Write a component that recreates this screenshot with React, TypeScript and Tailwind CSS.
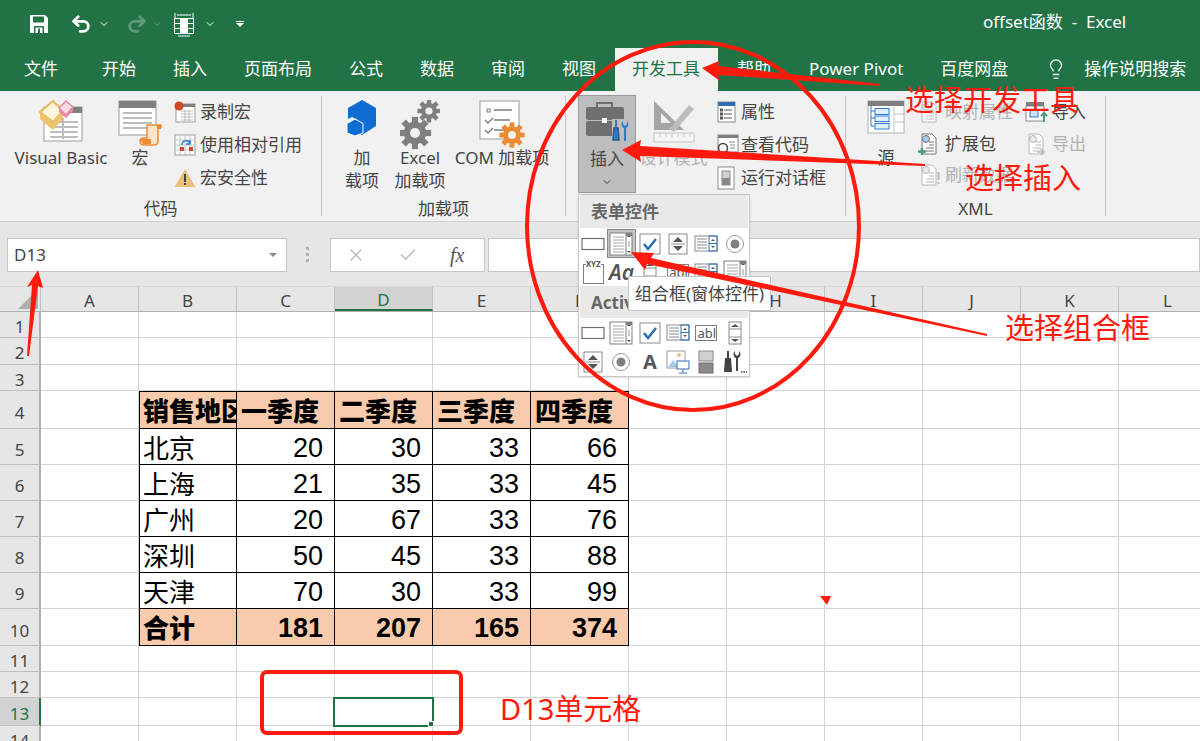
import { ChevronDown, Check, Lightbulb, Redo2, Undo2, X } from "lucide-react";
import type { ReactNode } from "react";

const tabs = ["开始", "插入", "页面布局", "公式", "数据", "审阅", "视图"];
const cols = ["A", "B", "C", "D", "E", "F", "G", "H", "I", "J", "K", "L"];

const rows = [
  { n: 1, h: "h-[26px]" },
  { n: 2, h: "h-[27px]" },
  { n: 3, h: "h-[26px]" },
  { n: 4, h: "h-[38px]", head: true, cells: ["销售地区", "一季度", "二季度", "三季度", "四季度"] },
  { n: 5, h: "h-[36px]", cells: ["北京", "20", "30", "33", "66"] },
  { n: 6, h: "h-[36px]", cells: ["上海", "21", "35", "33", "45"] },
  { n: 7, h: "h-[36px]", cells: ["广州", "20", "67", "33", "76"] },
  { n: 8, h: "h-[36px]", cells: ["深圳", "50", "45", "33", "88"] },
  { n: 9, h: "h-[36px]", cells: ["天津", "70", "30", "33", "99"] },
  { n: 10, h: "h-[37px]", total: true, cells: ["合计", "181", "207", "165", "374"] },
  { n: 11, h: "h-[26px]" },
  { n: 12, h: "h-[26px]" },
  { n: 13, h: "h-[28px]", active: true },
  { n: 14, h: "h-[26px]" },
];

function Save() {
  return (
    <svg width="20" height="20" viewBox="0 0 20 20">
      <path d="M1 1h15l3 3v15H1z" fill="#fff" />
      <rect x="4" y="2.5" width="11" height="6" fill="#217346" />
      <rect x="5" y="12" width="10" height="7" fill="#217346" />
      <rect x="6.5" y="13.5" width="7" height="5.5" fill="#fff" />
      <rect x="9" y="14.5" width="2" height="4.5" fill="#217346" />
    </svg>
  );
}

function FreezeIcon() {
  return (
    <svg width="22" height="26" viewBox="0 0 22 26" fill="none" stroke="#fff" strokeWidth="1">
      <path d="M2 2v5M20 2v5M4 4h14" />
      <rect x="1.5" y="7.5" width="19" height="15" />
      <path d="M7.5 7.5v15M14.5 7.5v15M1.5 12.5h19M1.5 17.5h19" />
      <rect x="8" y="8" width="6" height="14" fill="#fff" />
      <path d="M5 25h12" />
    </svg>
  );
}

function VbIcon() {
  return (
    <svg width="44" height="42" viewBox="0 0 44 42">
      <rect x="5" y="7" width="38" height="34" fill="#fff" stroke="#9a9a9a" />
      <rect x="5" y="7" width="38" height="6" fill="#7f7f7f" />
      <path d="M11 22h28M11 27h28M11 32h28M11 37h28M24 18v21" stroke="#bdbdbd" strokeWidth="2" />
      <path d="M14 1l10 10-10 11L1 12z" fill="#fff5d8" stroke="#e8b860" strokeWidth="2" />
      <path d="M1 12v7l13 11 10-11v-8L14 22z" fill="#eec36c" />
      <path d="M27 1l7 6-7 8-7-7z" fill="#fbdbe2" stroke="#e58aa0" strokeWidth="1.5" />
      <path d="M20 8v4l7 6 7-7V7l-7 8z" fill="#e58aa0" />
    </svg>
  );
}

function MacroIcon() {
  return (
    <svg width="44" height="46" viewBox="0 0 44 46">
      <rect x="1" y="1" width="37" height="34" fill="#fff" stroke="#9a9a9a" />
      <rect x="1" y="1" width="37" height="7" fill="#7f7f7f" />
      <path d="M5 13h29M5 18h29M5 23h29M5 28h29" stroke="#bdbdbd" strokeWidth="2" />
      <path d="M29 25h14v2h-3v14c0 3-2 4-4 4H26c-3 0-4-2-4-4 0-2 2-3 4-3h3z" fill="#fbe4cc" stroke="#ed8b33" strokeWidth="1.5" />
      <path d="M22 39h11v5H25z" fill="#ed8b33" />
      <path d="M39 25h4v4h-4z" fill="#ed8b33" />
    </svg>
  );
}

function RecordIcon() {
  return (
    <svg width="22" height="22" viewBox="0 0 22 22">
      <rect x="2" y="3" width="19" height="18" fill="#fff" stroke="#9a9a9a" />
      <rect x="2" y="3" width="19" height="3" fill="#7f7f7f" />
      <path d="M7 10h12M7 13h12M7 16h12M7 19h12M11 9v11M15 9v11" stroke="#bdbdbd" />
      <circle cx="5" cy="5" r="4.5" fill="#d24726" />
    </svg>
  );
}

function RelativeIcon() {
  return (
    <svg width="22" height="22" viewBox="0 0 22 22" fill="none">
      <rect x="1" y="1" width="20" height="20" fill="#fff" stroke="#9a9a9a" />
      <path d="M6 1v20M11 1v20M16 1v20M1 6h20M1 11h20M1 16h20" stroke="#c4c4c4" />
      <rect x="6" y="13" width="4" height="4" fill="#d24726" />
      <rect x="15" y="13" width="4" height="4" fill="#d24726" />
      <path d="M8 11c0-5 7-6 8-1M16 6v4h-4" stroke="#2b7cd3" strokeWidth="1.5" />
    </svg>
  );
}

function WarnIcon() {
  return (
    <svg width="22" height="20" viewBox="0 0 22 20">
      <path d="M11 1l10.5 18H.5z" fill="#edc07a" />
      <rect x="10" y="6" width="2" height="8" fill="#444" />
      <rect x="10" y="15" width="2" height="2" fill="#444" />
    </svg>
  );
}

function HexIcon() {
  return (
    <svg width="32" height="36" viewBox="0 0 32 36">
      <path d="M16 0l14 8v18l-14 9-4-2V20l-6-3-4 2V8z" fill="#0f6cd0" />
      <path d="M9 19l8 4.5V33l-8 3-8-3v-9.500z" fill="#0f6cd0" stroke="#fff" strokeWidth="1" />
    </svg>
  );
}

function Gear({ x, y, r, fill }: { x: number; y: number; r: number; fill: string }) {
  const teeth = [0, 45, 90, 135, 180, 225, 270, 315];
  return (
    <g transform={`translate(${x} ${y})`}>
      {teeth.map((a) => (
        <rect key={a} x={-r * 0.22} y={-r * 1.15} width={r * 0.44} height={r * 0.5} fill={fill} transform={`rotate(${a})`} />
      ))}
      <circle r={r * 0.8} fill={fill} />
      <circle r={r * 0.36} fill="#f1f1f1" />
    </g>
  );
}

function GearsIcon() {
  return (
    <svg width="40" height="50" viewBox="0 0 40 50">
      <Gear x={29} y={11} r={10} fill="#7f7f7f" />
      <Gear x={15} y={33} r={14} fill="#7f7f7f" />
    </svg>
  );
}

function ComIcon() {
  return (
    <svg width="46" height="48" viewBox="0 0 46 48" fill="none">
      <rect x="1" y="1" width="39" height="38" fill="#fff" stroke="#9a9a9a" />
      <rect x="8" y="9" width="3" height="3" stroke="#7f7f7f" />
      <path d="M15 10h18M15 20h16M15 30h14" stroke="#7f7f7f" strokeWidth="1.5" />
      <path d="M6 20l3 3 5-5M6 30l3 3 5-5" stroke="#7f7f7f" strokeWidth="1.5" />
      <Gear x={33} y={35} r={11} fill="#ed8b33" />
    </svg>
  );
}

function ToolboxIcon() {
  return (
    <svg width="44" height="44" viewBox="0 0 44 44">
      <path d="M12 6V2h15v4" fill="none" stroke="#6f6f6f" strokeWidth="2" />
      <rect x="1" y="6" width="38" height="13" rx="2" fill="#6f6f6f" />
      <rect x="1" y="20" width="38" height="15" rx="2" fill="#6f6f6f" />
      <rect x="17" y="17" width="5" height="5" fill="#fff" />
      <rect x="27" y="18" width="17" height="26" fill="#bdbdbd" />
      <path d="M31 19v8M29 27h4l1 12h-6z" stroke="#33557e" strokeWidth="1.500" fill="#2b7cd3" />
      <path d="M38 20v3l2 2 2-2v-3c2 2 2 6-1 7v13h-2V27c-3-1-3-5-1-7z" fill="#2b7cd3" />
    </svg>
  );
}

function DesignIcon() {
  return (
    <svg width="46" height="44" viewBox="0 0 46 44">
      <path d="M3 1v29h30zM10 13v10h10z" fill="#a6a6a6" fillRule="evenodd" />
      <path d="M18 29L38 5l5 4-20 23z" fill="#bdbdbd" />
      <rect x="3" y="33" width="40" height="9" fill="#f6f6f6" stroke="#c4c4c4" />
      <path d="M9 33v4M15 33v4M21 33v4M27 33v4M33 33v4M39 33v4" stroke="#c4c4c4" />
    </svg>
  );
}

function PropertyIcon() {
  return (
    <svg width="20" height="22" viewBox="0 0 20 22" fill="none">
      <rect x="1" y="1" width="17" height="20" fill="#fff" stroke="#8a8a8a" />
      <rect x="1" y="1" width="17" height="4" fill="#2e6eb5" />
      <path d="M7 9h8M7 13h8M7 17h8" stroke="#555" />
      <rect x="3.500" y="8" width="2" height="2" stroke="#555" />
      <rect x="3.500" y="12" width="2" height="2" stroke="#555" />
      <rect x="3.500" y="16" width="2" height="2" stroke="#555" />
    </svg>
  );
}

function ViewCodeIcon() {
  return (
    <svg width="22" height="22" viewBox="0 0 22 22" fill="none">
      <rect x="1" y="1" width="20" height="17" fill="#fff" stroke="#8a8a8a" />
      <rect x="1" y="1" width="20" height="3" fill="#7f7f7f" />
      <path d="M12 8h6M13 11h5M13 14h5" stroke="#8a8a8a" />
      <circle cx="6" cy="14" r="4.500" fill="#fff" stroke="#444" strokeWidth="1.500" />
      <path d="M9 17l3 4" stroke="#444" strokeWidth="2" />
    </svg>
  );
}

function DialogIcon() {
  return (
    <svg width="18" height="24" viewBox="0 0 18 24">
      <rect x="1" y="1" width="16" height="22" fill="#fff" stroke="#8a8a8a" />
      <rect x="5" y="5" width="8" height="14" fill="#d0d0d0" stroke="#8a8a8a" />
      <rect x="5" y="12" width="8" height="7" fill="#8a8a8a" />
    </svg>
  );
}

function SourceIcon() {
  return (
    <svg width="38" height="34" viewBox="0 0 38 34" fill="none">
      <rect x="1" y="1" width="36" height="32" fill="#fff" stroke="#b0b0b0" />
      <rect x="1" y="1" width="36" height="5" fill="#7f7f7f" />
      <path d="M27 6v27M27 14h10M27 22h10" stroke="#c4c4c4" />
      <path d="M4 6v20h4M4 11h4M4 18h4" stroke="#2b7cd3" />
      <rect x="8" y="8.500" width="14" height="6" stroke="#2b7cd3" fill="#e5effa" />
      <rect x="8" y="16" width="14" height="5.500" stroke="#2b7cd3" fill="#e5effa" />
      <rect x="8" y="23.500" width="14" height="5.500" stroke="#2b7cd3" fill="#e5effa" />
    </svg>
  );
}

function DocIcon({ tone, plus, bang, arrow }: { tone: string; plus?: boolean; bang?: boolean; arrow?: boolean }) {
  return (
    <svg width="22" height="22" viewBox="0 0 22 22" fill="none">
      <path d="M4 1h10l4 4v16H4z" fill="#fff" stroke={tone} />
      <path d="M11 9h5M11 12h5M8 15h8M8 18h8" stroke={tone} />
      <circle cx="8" cy="6" r="3.500" fill={plus ? "#a8c8ea" : "#e8e8e8"} stroke={tone} />
      {plus && <path d="M4 15v7M0 18.500h8" stroke="#4e9a7c" strokeWidth="2.500" />}
      {bang && <path d="M20.500 8v8M20.500 18v2" stroke={tone} strokeWidth="2" />}
      {arrow && <path d="M12 19h7M16 16l3 3-3 3" stroke={tone} strokeWidth="1.500" />}
    </svg>
  );
}

function ImportIcon() {
  return (
    <svg width="24" height="22" viewBox="0 0 24 22" fill="none">
      <rect x="1" y="5" width="18" height="15" fill="#fff" stroke="#8a8a8a" />
      <rect x="1" y="1" width="18" height="4" fill="#7f7f7f" />
      <rect x="5" y="9" width="8" height="7" fill="#cfe0f3" stroke="#2b7cd3" />
      <path d="M19 21v-8M16 15l3-3 3 3" stroke="#4e9a7c" strokeWidth="2" />
    </svg>
  );
}

function Big({ icon, children, className, disabled }: { icon: ReactNode; children: ReactNode; className: string; disabled?: boolean }) {
  return (
    <div className={`flex flex-col items-center text-center leading-[23px] ${disabled ? "text-[#b1b1b1]" : ""} ${className}`}>
      <div className="h-[51px] pt-[5px] flex items-start justify-center">{icon}</div>
      {children}
    </div>
  );
}

function Small({ icon, label, disabled, w, h }: { icon: ReactNode; label: string; disabled?: boolean; w: string; h?: string }) {
  return (
    <div className={`flex items-center whitespace-nowrap ${h ?? "h-[33px]"} ${disabled ? "text-[#b1b1b1]" : ""}`}>
      <div className={`flex items-center shrink-0 ${w}`}>{icon}</div>
      {label}
    </div>
  );
}

function Group({ label, width, children }: { label: string; width: string; children: ReactNode }) {
  return (
    <div className={`flex flex-col pt-[4px] shrink-0 ${width}`}>
      <div className="flex h-[102px]">{children}</div>
      <div className="h-[24px] leading-[24px] text-center">{label}</div>
    </div>
  );
}

function Sep() {
  return <div className="w-px h-[120px] mt-[5px] bg-[#c6c6c6] shrink-0" />;
}

// form control glyphs in the insert dropdown
function BtnCtl() {
  return (
    <svg width="24" height="14" viewBox="0 0 24 14">
      <rect x="1" y="1.500" width="22" height="11" fill="#fff" stroke="#6f6f6f" strokeWidth="1.200" />
    </svg>
  );
}

function ComboCtl() {
  return (
    <svg width="24" height="24" viewBox="0 0 24 24" fill="none">
      <rect x="1" y="1" width="22" height="22" fill="#fff" stroke="#7f7f7f" />
      <path d="M4 5h11M4 8h11M4 11h11M4 14h11M4 17h11M4 20h11" stroke="#a6a6a6" />
      <path d="M17 1v22" stroke="#7f7f7f" />
      <path d="M18 5l2-2 2 2zM18 19l2 2 2-2z" fill="#555" />
      <path d="M20 9v6" stroke="#9a9a9a" />
      <rect x="17" y="1" width="6" height="3" fill="#7f7f7f" />
    </svg>
  );
}

function CheckCtl() {
  return (
    <svg width="22" height="22" viewBox="0 0 22 22" fill="none">
      <rect x="1" y="1" width="20" height="20" fill="#fff" stroke="#8a8a8a" />
      <path d="M5 11l4 5 8-10" stroke="#2e6eb5" strokeWidth="2.500" />
    </svg>
  );
}

function SpinCtl() {
  return (
    <svg width="20" height="22" viewBox="0 0 20 22" fill="none">
      <rect x="1" y="1" width="18" height="20" fill="#fff" stroke="#8a8a8a" />
      <path d="M5 9l5-5 5 5zM5 13l5 5 5-5z" fill="#555" />
      <path d="M3 11h14" stroke="#8a8a8a" />
    </svg>
  );
}

function ListCtl() {
  return (
    <svg width="24" height="18" viewBox="0 0 24 18" fill="none">
      <rect x="1" y="1" width="22" height="15" fill="#fff" stroke="#8a8a8a" />
      <path d="M3 4h10M3 7h10M3 10h10M3 13h10" stroke="#8a8a8a" />
      <rect x="15" y="1" width="8" height="15" stroke="#2e6eb5" />
      <path d="M15 8.500h8" stroke="#2e6eb5" />
      <path d="M17 6l2-2 2 2zM17 11l2 2 2-2z" fill="#555" />
    </svg>
  );
}

function RadioCtl() {
  return (
    <svg width="20" height="20" viewBox="0 0 20 20">
      <circle cx="10" cy="10" r="8.500" fill="#fff" stroke="#9a9a9a" />
      <circle cx="10" cy="10" r="4.500" fill="#7f7f7f" />
    </svg>
  );
}

function GroupCtl() {
  return (
    <div className="relative w-[21px] h-[20px] mt-[3px] border border-[#7f7f7f]">
      <span className="absolute -top-[6px] left-[2px] bg-white text-[8px] leading-[9px] font-bold text-[#555]">XYZ</span>
    </div>
  );
}

function AblCtl() {
  return (
    <div className="w-[22px] h-[16px] border border-[#7f7f7f] text-[13px] leading-[14px] text-[#555] bg-white px-px overflow-hidden">abl</div>
  );
}

function ScrollCtl() {
  return (
    <svg width="14" height="24" viewBox="0 0 14 24" fill="none">
      <rect x="1" y="1" width="12" height="22" fill="#fff" stroke="#8a8a8a" />
      <path d="M1 8h12M1 16h12" stroke="#8a8a8a" />
      <path d="M3 6l4-3 4 3zM3 18l4 3 4-3z" fill="#555" />
    </svg>
  );
}

function ImageCtl() {
  return (
    <svg width="24" height="24" viewBox="0 0 24 24" fill="none">
      <rect x="1" y="1" width="18" height="17" fill="#fff" stroke="#9a9a9a" />
      <circle cx="13" cy="5" r="2" fill="#edc07a" />
      <path d="M2 17l5-7 6 7z" fill="#a8c8ea" />
      <rect x="11" y="11" width="12" height="8" fill="#fff" stroke="#2e6eb5" />
      <path d="M17 19v3M13 23h8" stroke="#2e6eb5" />
    </svg>
  );
}

function ToggleCtl() {
  return (
    <svg width="16" height="24" viewBox="0 0 16 24">
      <rect x="1" y="1" width="14" height="10" fill="#d0d0d0" stroke="#8a8a8a" />
      <rect x="1" y="13" width="14" height="10" fill="#8a8a8a" stroke="#6f6f6f" />
    </svg>
  );
}

function MoreCtl() {
  return (
    <svg width="24" height="24" viewBox="0 0 24 24" fill="none">
      <path d="M5 1v8M3 9h4l1 12H2z" stroke="#444" strokeWidth="2" fill="#444" />
      <path d="M12 1v3l2 2 2-2V1c2 2 2 6-1 7v13h-2V8c-3-1-3-5-1-7z" fill="#444" />
      <path d="M18 22h1.500M20.500 22H22M23 22h1" stroke="#444" strokeWidth="1.500" />
    </svg>
  );
}

function Ctl({ children, selected }: { children?: ReactNode; selected?: boolean }) {
  return (
    <div className={`flex items-center justify-center ${selected ? "bg-[#c6c6c6] border border-[#8a8a8a]" : ""}`}>{children}</div>
  );
}

function InsertMenu() {
  return (
    <div className="absolute left-[578px] top-[194px] w-[172px] h-[183px] bg-white border border-[#c6c6c6] text-[#666] shadow-sm">
      <div className="h-[33px] mx-[1px] bg-[#e9e9e9] font-bold leading-[33px] pl-[11px] text-[#666]">表单控件</div>
      <div className="grid grid-cols-6 grid-rows-[29px_28px] pt-[1px]">
        <Ctl><BtnCtl /></Ctl>
        <Ctl selected><ComboCtl /></Ctl>
        <Ctl><CheckCtl /></Ctl>
        <Ctl><SpinCtl /></Ctl>
        <Ctl><ListCtl /></Ctl>
        <Ctl><RadioCtl /></Ctl>
        <Ctl><GroupCtl /></Ctl>
        <Ctl><span className="italic font-semibold text-[21px] leading-[28px] text-[#555]">Aa</span></Ctl>
        <Ctl><ScrollCtl /></Ctl>
        <Ctl><AblCtl /></Ctl>
        <Ctl><ListCtl /></Ctl>
        <Ctl><ComboCtl /></Ctl>
      </div>
      <div className="h-[32px] mx-[1px] bg-[#e9e9e9] font-bold leading-[33px] pl-[11px] text-[#666] text-[17px]">ActiveX 控件</div>
      <div className="grid grid-cols-6 grid-rows-[29px_30px]">
        <Ctl><BtnCtl /></Ctl>
        <Ctl><ComboCtl /></Ctl>
        <Ctl><CheckCtl /></Ctl>
        <Ctl><ListCtl /></Ctl>
        <Ctl><AblCtl /></Ctl>
        <Ctl><ScrollCtl /></Ctl>
        <Ctl><SpinCtl /></Ctl>
        <Ctl><RadioCtl /></Ctl>
        <Ctl><span className="font-bold text-[20px] text-[#555]">A</span></Ctl>
        <Ctl><ImageCtl /></Ctl>
        <Ctl><ToggleCtl /></Ctl>
        <Ctl><MoreCtl /></Ctl>
      </div>
      <div className="absolute left-[49px] top-[81px] w-[143px] h-[35px] bg-white border border-[#c6c6c6] text-[17px] leading-[33px] text-center text-[#444] whitespace-nowrap">
        组合框(窗体控件)
      </div>
    </div>
  );
}

function Sheet() {
  return (
    <div>
      {rows.map((r) => (
        <div key={r.n} className={`flex ${r.h}`}>
          <div
            className={`w-[41px] shrink-0 border-b border-b-[#c0c0c0] border-r-2 flex items-center justify-center text-[17px] leading-[20px] ${
              r.cells ? "pt-[7px]" : "pt-[4px]"
            } ${r.active ? "bg-[#d2d2d2] border-r-[#217346] text-[#217346]" : "bg-[#e6e6e6] border-r-[#b0b0b0] text-[#444]"}`}
          >
            {r.n}
          </div>
          {cols.map((c, i) => {
            const val = r.cells && i >= 1 && i <= 5 ? r.cells[i - 1] : undefined;
            const inTable = val !== undefined;
            const filled = r.head || r.total;
            return (
              <div
                key={c}
                className={`w-[98px] shrink-0 overflow-hidden whitespace-nowrap border-b border-r flex items-center text-black ${
                  inTable ? "border-black pt-[2px]" : "border-[#d4d4d4]"
                } ${inTable && (i > 1 && r.head ? "pl-[4px]" : "pl-[3px]")} ${inTable && i === 1 ? "border-l" : ""} ${
                  inTable && r.head ? "border-t" : ""
                } ${inTable && filled ? "bg-[#f8cbad] font-black" : "bg-white"} ${i === 0 ? "w-[97px]" : ""} ${
                  inTable && i > 1 && !r.head ? "justify-end pr-[11px]" : ""
                }`}
              >
                {val !== undefined && (
                  <span
                    className={
                      i === 1 || r.head
                        ? "text-[26px] leading-[32px]"
                        : "text-[27px] leading-[32px] font-['Liberation_Sans',sans-serif] [font-weight:inherit]"
                    }
                  >
                    {val}
                  </span>
                )}
              </div>
            );
          })}
        </div>
      ))}
    </div>
  );
}

function Notes() {
  return (
    <>
      <div className="absolute left-[333px] top-[697px] w-[101px] h-[30px] border-2 border-[#217346]">
        <div className="absolute -right-[2px] -bottom-[2px] w-[6px] h-[6px] bg-[#217346] border border-white" />
      </div>
      <svg className="absolute left-0 top-0 pointer-events-none" width="1200" height="741" viewBox="0 0 1200 741">
        <ellipse cx="693" cy="226" rx="166" ry="184" fill="none" stroke="#ff1a0d" strokeWidth="4" />
        <rect x="262" y="672" width="199" height="61" rx="5" fill="none" stroke="#ff1a0d" strokeWidth="4" />
        <path d="M702 68l17-7-1 5 162 18v2l-162-11 2 6z" fill="#ff1a0d" />
        <path d="M622 150l19-10-1 6 285 18v2l-285-10 1 6z" fill="#ff1a0d" />
        <path d="M631 252l23 1-3 5 336 76v2l-340-72-2 6z" fill="#ff1a0d" />
        <path d="M38 270l5 18-5-2-9 70h-2l5-71-5 2z" fill="#ff1a0d" />
        <path d="M820 596h11l-4 9z" fill="#ff1a0d" />
      </svg>
      <div className="absolute left-[905px] top-[81px] text-[29px] leading-[38px] text-[#ff1a0d] whitespace-nowrap">选择开发工具</div>
      <div className="absolute left-[965px] top-[159px] text-[29px] leading-[38px] text-[#ff1a0d] whitespace-nowrap">选择插入</div>
      <div className="absolute left-[1005px] top-[309px] text-[29px] leading-[38px] text-[#ff1a0d] whitespace-nowrap">选择组合框</div>
      <div className="absolute left-[500px] top-[690px] text-[29px] leading-[38px] text-[#ff1a0d] whitespace-nowrap">D13单元格</div>
    </>
  );
}

export default function App() {
  return (
    <div className="relative w-[1200px] h-[741px] overflow-hidden bg-white text-[17px] text-[#444] font-['Noto_Sans','Noto_Sans_CJK_SC',sans-serif]">
      {/* title bar */}
      <div className="h-[47px] bg-[#217346] flex items-center text-white">
        <div className="ml-[29px] w-[41px]"><Save /></div>
        <Undo2 size={22} strokeWidth={3} />
        <ChevronDown size={12} className="ml-[6px]" />
        <Redo2 size={22} strokeWidth={3} className="ml-[16px] text-[#5d9a7d]" />
        <ChevronDown size={12} className="ml-[3px] text-[#5d9a7d]" />
        <div className="ml-[10px] mr-[9px]"><FreezeIcon /></div>
        <ChevronDown size={12} />
        <div className="ml-[20px] flex flex-col items-center gap-[1px]">
          <div className="w-[8px] h-px bg-white" />
          <div className="w-0 h-0 border-x-[4px] border-x-transparent border-t-[4px] border-t-white" />
        </div>
        <div className="ml-[739px] mb-[4px] whitespace-pre">offset函数  -  Excel</div>
      </div>

      {/* tabs */}
      <div className="h-[44px] bg-[#217346] flex text-white">
        <div className="pl-[24px] pr-[27px] leading-[44px]">文件</div>
        {tabs.map((t) => (
          <div key={t} className="px-[17px] mr-[3px] leading-[44px] whitespace-nowrap">{t}</div>
        ))}
        <div className="px-[17px] ml-[-1px] mt-[1px] w-[103px] bg-[#f1f1f1] text-[#217346] leading-[42px] whitespace-nowrap">开发工具</div>
        <div className="px-[19px] leading-[44px]">帮助</div>
        <div className="px-[18px] ml-[1px] leading-[44px] whitespace-nowrap">Power Pivot</div>
        <div className="px-[19px] leading-[44px] whitespace-nowrap">百度网盘</div>
        <div className="flex items-center ml-[18px] w-[38px]"><Lightbulb size={22} strokeWidth={1.4} /></div>
        <div className="ml-[1px] leading-[44px] whitespace-nowrap">操作说明搜索</div>
      </div>

      {/* ribbon */}
      <div className="h-[131px] bg-[#f1f1f1] border-b border-[#d0d0d0] flex">
        <Group label="代码" width="w-[321px]">
          <Big icon={<VbIcon />} className="ml-[15px] w-[92px] whitespace-nowrap">Visual Basic</Big>
          <Big icon={<MacroIcon />} className="ml-[11px] w-[44px]">宏</Big>
          <div className="ml-[12px]">
            <Small icon={<RecordIcon />} label="录制宏" w="w-[26px]" />
            <Small icon={<RelativeIcon />} label="使用相对引用" w="w-[26px]" />
            <Small icon={<WarnIcon />} label="宏安全性" w="w-[26px]" />
          </div>
        </Group>
        <Sep />
        <Group label="加载项" width="w-[243px]">
          <Big icon={<HexIcon />} className="ml-[20px] w-[40px]">加<br />载项</Big>
          <Big icon={<GearsIcon />} className="ml-[12px] w-[52px]">Excel<br />加载项</Big>
          <Big icon={<ComIcon />} className="ml-[7px] w-[98px] whitespace-nowrap">COM 加载项</Big>
        </Group>
        <Sep />
        <Group label="" width="w-[279px]">
          <Big icon={<ToolboxIcon />} className="ml-[12px] w-[58px] h-[98px] bg-[#bdbdbd] border border-[#9a9a9a]">
            插入
            <ChevronDown size={12} className="mt-[6px]" />
          </Big>
          <Big icon={<DesignIcon />} className="ml-[4px] w-[67px] whitespace-nowrap" disabled>设计模式</Big>
          <div className="ml-[10px]">
            <Small icon={<PropertyIcon />} label="属性" w="w-[24px]" />
            <Small icon={<ViewCodeIcon />} label="查看代码" w="w-[24px]" />
            <Small icon={<DialogIcon />} label="运行对话框" w="w-[24px]" />
          </div>
        </Group>
        <Sep />
        <Group label="XML" width="w-[259px]">
          <Big icon={<SourceIcon />} className="ml-[18px] w-[44px]">源</Big>
          <div className="ml-[10px] w-[107px]">
            <Small icon={<DocIcon tone="#b8b8b8" />} label="映射属性" w="w-[27px]" disabled />
            <Small icon={<DocIcon tone="#777" plus />} label="扩展包" w="w-[27px]" h="h-[31px]" />
            <Small icon={<DocIcon tone="#b8b8b8" bang />} label="刷新数据" w="w-[27px]" h="h-[31px]" disabled />
          </div>
          <div>
            <Small icon={<ImportIcon />} label="导入" w="w-[27px]" />
            <Small icon={<DocIcon tone="#b8b8b8" arrow />} label="导出" w="w-[27px]" h="h-[31px]" disabled />
          </div>
        </Group>
        <Sep />
      </div>

      {/* formula bar */}
      <div className="h-[64px] bg-[#e6e6e6] flex items-start pt-[16px]">
        <div className="ml-[7px] w-[280px] h-[34px] bg-white border border-[#c6c6c6] flex items-center justify-between pl-[6px] pr-[9px]">
          D13
          <div className="w-0 h-0 border-x-[4px] border-x-transparent border-t-[4px] border-t-[#8a8a8a]" />
        </div>
        <div className="ml-[19px] mt-[9px] flex flex-col gap-[3px]">
          <div className="w-[3px] h-[3px] bg-[#b0b0b0]" />
          <div className="w-[3px] h-[3px] bg-[#b0b0b0]" />
          <div className="w-[3px] h-[3px] bg-[#b0b0b0]" />
        </div>
        <div className="ml-[21px] w-[155px] h-[34px] bg-white border border-[#c6c6c6] flex items-center text-[#b8b8b8]">
          <X size={20} className="ml-[15px]" strokeWidth={1.6} />
          <Check size={20} className="ml-[32px]" strokeWidth={1.6} />
          <span className="ml-[32px] italic text-[#555] font-['Liberation_Serif',serif] text-[20px]">fx</span>
        </div>
        <div className="ml-[3px] flex-1 h-[34px] bg-white border border-[#c6c6c6]" />
      </div>

      {/* column headers */}
      <div className="flex h-[26px] bg-[#e6e6e6] border-t border-[#d8d8d8] border-b border-b-[#b0b0b0]">
        <div className="relative w-[41px] shrink-0 border-r border-[#c0c0c0]">
          <div className="absolute right-[2px] bottom-[2px] w-0 h-0 border-l-[20px] border-l-transparent border-b-[20px] border-b-[#b0b0b0]" />
        </div>
        {cols.map((c, i) => (
          <div
            key={c}
            className={`w-[98px] shrink-0 flex items-center justify-center pt-[4px] text-[17px] border-r border-[#c0c0c0] ${
              i === 0 ? "w-[97px]" : ""
            } ${c === "D" ? "bg-[#d2d2d2] text-[#217346] border-b-2 border-b-[#217346]" : ""}`}
          >
            {c}
          </div>
        ))}
      </div>

      <Sheet />
      <InsertMenu />
      <Notes />
    </div>
  );
}
